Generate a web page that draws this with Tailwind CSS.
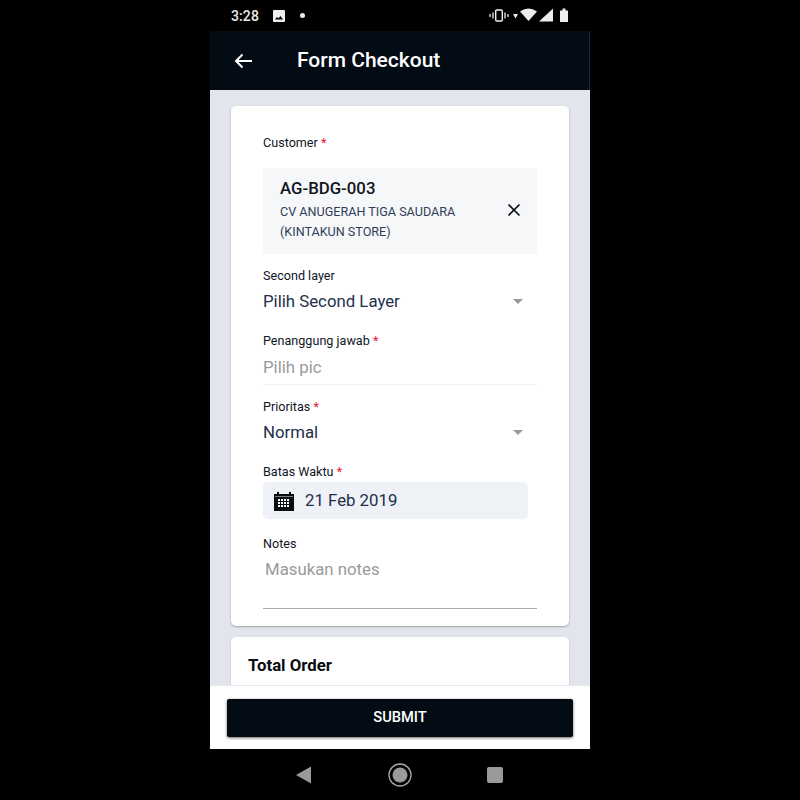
<!DOCTYPE html>
<html><head><meta charset="utf-8"><script src="https://cdn.jsdelivr.net/npm/@tailwindcss/browser@4"></script></head>
<body class="bg-black font-['Roboto',sans-serif]">
<div class="w-[800px] h-[800px] bg-black flex justify-center overflow-hidden">
<div class="w-[380px] h-[800px] flex flex-col">
  <div class="h-[31px] shrink-0 bg-black flex items-center pl-[21px] pr-[21px] text-[#e8e8e8]">
    <span class="text-[14px] font-medium w-[29px] leading-none tracking-[0.1px]">3:28</span>
    <svg class="ml-[13px]" width="12" height="12" viewBox="0 0 12 12"><path fill="#eee" d="M1 0h10a1 1 0 0 1 1 1v10a1 1 0 0 1-1 1H1a1 1 0 0 1-1-1V1a1 1 0 0 1 1-1zM2 9.500h8L7.500 6 5.500 8.300 4 7z" fill-rule="evenodd"/></svg>
    <span class="ml-[15px] w-[5px] h-[5px] rounded-full bg-[#eee]"></span>
    <svg class="ml-auto" width="80" height="16" viewBox="0 0 80 16">
      <g fill="none" stroke="#eee"><rect x="6.700" y="2" width="6.600" height="11" rx="1" stroke-width="1.400"/><path d="M4 4.500v6M1 6v3M16 4.500v6M19 6v3" stroke-width="1.300"/></g>
      <path fill="#eee" d="M24 6h5l-2.500 4.500zM31 3.500Q39.500-2.500 48 3.500L39.500 13zM50 13.500 64 0.500v13z"/>
      <path fill="#eee" d="M71 2.500h2.500V0.500h3v2H79v11.500h-8z"/>
    </svg>
  </div>
  <div class="h-[59px] shrink-0 bg-[#030b14] flex items-center text-white border-r border-[#1a2a3a]">
    <svg class="ml-[24px]" width="19" height="16" viewBox="0 0 19 16"><path d="M18 8H2M8.500 1.500 2 8l6.500 6.500" fill="none" stroke="#fff" stroke-width="2"/></svg>
    <span class="ml-[44px] text-[21px] font-medium leading-none">Form Checkout</span>
  </div>
  <div class="relative h-[659px] shrink-0 bg-[#e2e6ec] px-[21px] pt-[16px] flex flex-col gap-[11px] overflow-hidden">
    <div class="h-[520px] shrink-0 bg-white rounded-[5px] shadow-[0_1px_2px_rgba(0,0,0,0.3)] px-[32px] pt-[29px]">
      <div class="text-[12.600px] leading-[16px] text-[#10161f]">Customer <span class="text-[#ee1133]">*</span></div>
      <div class="mt-[17px] h-[86px] w-[274px] bg-[#f6f7f9] flex items-center pl-[17px] pb-[2px]">
        <div class="w-[212px]">
          <div class="text-[16.800px] font-medium leading-[20px] text-[#0e1420]">AG-BDG-003</div>
          <div class="text-[12.600px] leading-[20px] text-[#2f3d58] mt-[4px]">CV ANUGERAH TIGA SAUDARA (KINTAKUN STORE)</div>
        </div>
        <svg class="ml-[15px]" width="14" height="14" viewBox="0 0 14 14"><path d="M1.500 1.500l11 11M12.500 1.500l-11 11" stroke="#0a0d12" stroke-width="1.700"/></svg>
      </div>
      <div class="mt-[14px] text-[12.600px] leading-[16px] text-[#10161f]">Second layer</div>
      <div class="mt-[6px] h-[24px] w-[274px] flex items-center justify-between text-[16.800px] text-[#232f4a] pr-[14px]">Pilih Second Layer<span class="mb-[2px] w-0 h-0 border-x-[5px] border-x-transparent border-t-[5px] border-t-[#999]"></span></div>
      <div class="mt-[19px] text-[12.600px] leading-[16px] text-[#10161f]">Penanggung jawab <span class="text-[#ee1133]">*</span></div>
      <div class="mt-[6px] h-[30px] w-[274px] border-b border-[#f1f2f4] text-[16.800px] leading-[24px] text-[#9a9a9a]">Pilih pic</div>
      <div class="mt-[14px] text-[12.600px] leading-[16px] text-[#10161f]">Prioritas <span class="text-[#ee1133]">*</span></div>
      <div class="mt-[6px] h-[24px] w-[274px] flex items-center justify-between text-[16.800px] text-[#232f4a] pr-[14px]">Normal<span class="mb-[2px] w-0 h-0 border-x-[5px] border-x-transparent border-t-[5px] border-t-[#999]"></span></div>
      <div class="mt-[19px] text-[12.600px] leading-[16px] text-[#10161f]">Batas Waktu <span class="text-[#ee1133]">*</span></div>
      <div class="mt-[2px] h-[37px] w-[265px] rounded-[5px] bg-[#eef1f5] flex items-center pl-[11px] text-[16.800px] text-[#232f4a]">
        <svg width="20" height="20" viewBox="0 0 20 20"><path fill="#0a0d12" d="M0 3h3V1h2v2h10V1h2v2h3v17H0z"/><path fill="#fff" d="M1 5h18v.8H1z" opacity=".6"/><g fill="#fff"><rect x="4" y="8" width="2" height="2"/><rect x="7" y="8" width="2" height="2"/><rect x="10" y="8" width="2" height="2"/><rect x="13" y="8" width="2" height="2"/><rect x="4" y="11" width="2" height="2"/><rect x="7" y="11" width="2" height="2"/><rect x="10" y="11" width="2" height="2"/><rect x="13" y="11" width="2" height="2"/><rect x="4" y="14" width="2" height="2"/><rect x="7" y="14" width="2" height="2"/><rect x="10" y="14" width="2" height="2"/><rect x="13" y="14" width="2" height="2"/></g></svg>
        <span class="ml-[11px]">21 Feb 2019</span>
      </div>
      <div class="mt-[17px] text-[12.600px] leading-[16px] text-[#10161f]">Notes</div>
      <div class="mt-[5px] h-[52px] w-[274px] border-b border-[#a8adb8] pl-[2px] text-[16.800px] leading-[24px] text-[#9a9a9a]">Masukan notes</div>
    </div>
    <div class="h-[200px] shrink-0 bg-white rounded-[5px] shadow-[0_1px_2px_rgba(0,0,0,0.2)] px-[17px] pt-[18px]">
      <div class="text-[16.800px] font-bold leading-[20px] text-[#0a0d12]">Total Order</div>
    </div>
    <div class="absolute left-0 right-0 bottom-0 h-[64px] bg-white border-t border-[#e6e8ec] flex items-start px-[17px] pt-[13px]">
      <button class="w-[346px] h-[38px] pb-[2px] rounded-[2px] bg-[#030b14] text-white text-[14.700px] font-medium shadow-[0_1px_3px_rgba(0,0,0,0.6)]">SUBMIT</button>
    </div>
  </div>
  <div class="flex-1 bg-black flex items-center pl-[86px]">
    <svg width="16" height="18" viewBox="0 0 16 18"><path fill="#9a9a9a" d="M15 0.500v17L0 9z"/></svg>
    <svg class="ml-[76px]" width="24" height="24" viewBox="0 0 24 24"><circle cx="12" cy="12" r="11" fill="none" stroke="#aaa" stroke-width="1.300"/><circle cx="12" cy="12" r="7.500" fill="#9a9a9a"/></svg>
    <span class="ml-[75px] w-[16px] h-[16px] rounded-[2px] bg-[#9a9a9a]"></span>
  </div>
</div>
</div>
</body></html>
